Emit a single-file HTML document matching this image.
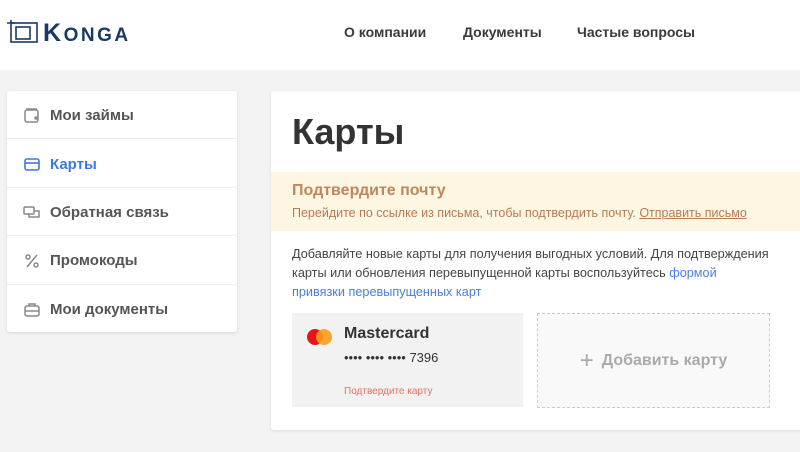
<!DOCTYPE html>
<html><head><meta charset="utf-8"><style>
*{margin:0;padding:0;box-sizing:border-box}
body{width:800px;height:452px;overflow:hidden;background:#f3f3f3;font-family:"Liberation Sans",sans-serif;position:relative}
.hdr{position:absolute;left:0;top:0;width:800px;height:70px;background:#fff}
.nav{position:absolute;top:24px;font-size:14px;font-weight:bold;color:#3a3a3a}
.side{position:absolute;left:7px;top:91px;width:230px;height:241px;background:#fff;border-radius:3px;box-shadow:0 1px 3px rgba(0,0,0,.12)}
.row{height:48.4px;border-bottom:1px solid #eee;display:flex;align-items:center;padding-left:16px;padding-top:2px;font-size:15px;font-weight:bold;color:#555}
.row:last-child{border-bottom:none}
.row svg{width:18px;height:18px;margin-right:9px}
.main{position:absolute;left:271px;top:91px;width:540px;height:339px;background:#fff;border-radius:3px;box-shadow:0 1px 3px rgba(0,0,0,.1)}
</style></head><body>
<div class="hdr">
<svg style="position:absolute;left:7px;top:20px" width="32" height="24" viewBox="0 0 32 24"><g fill="none" stroke="#1b3a63" stroke-width="1.6"><rect x="4" y="3" width="26" height="19"/><rect x="9" y="7" width="14" height="12"/><path d="M0 3h8M4 0v3"/></g></svg>
<div style="position:absolute;left:43px;top:19px;font-size:25px;font-weight:bold;color:#1b3a63;letter-spacing:2.5px">K<span style="font-size:19px">ONGA</span></div>
<div class="nav" style="left:344px">О компании</div>
<div class="nav" style="left:463px">Документы</div>
<div class="nav" style="left:577px">Частые вопросы</div>
</div>
<div class="side">
<div class="row"><svg viewBox="0 0 18 18" fill="none" stroke="#888" stroke-width="1.5"><rect x="2" y="3" width="13" height="12" rx="2"/><path d="M4 3V2h10"/><circle cx="13" cy="11" r="1"/></svg>Мои займы</div>
<div class="row" style="color:#3b78e0"><svg viewBox="0 0 18 18" fill="none" stroke="#3b78e0" stroke-width="1.6"><rect x="2" y="4" width="14" height="11" rx="2"/><path d="M2 8h14"/></svg>Карты</div>
<div class="row"><svg viewBox="0 0 18 18" fill="none" stroke="#888" stroke-width="1.5"><rect x="1" y="4" width="10" height="7" rx="1"/><path d="M6 11v3h10V8h-5"/></svg>Обратная связь</div>
<div class="row"><svg viewBox="0 0 18 18" fill="none" stroke="#888" stroke-width="1.5"><circle cx="5" cy="5" r="2"/><circle cx="13" cy="13" r="2"/><path d="M14 3L4 15"/></svg>Промокоды</div>
<div class="row"><svg viewBox="0 0 18 18" fill="none" stroke="#888" stroke-width="1.5"><rect x="2" y="5" width="14" height="10" rx="2"/><path d="M6 5V3h6v2M2 10h14"/></svg>Мои документы</div>
</div>
<div class="main">
<div style="position:absolute;left:21px;top:20px;font-size:36px;font-weight:bold;color:#333">Карты</div>
<div style="position:absolute;left:0;top:81px;width:540px;height:59px;background:#fdf6e2">
<div style="position:absolute;left:21px;top:10px;font-size:16px;font-weight:bold;color:#c0875a">Подтвердите почту</div>
<div style="position:absolute;left:21px;top:34px;font-size:12.5px;color:#b97a52">Перейдите по ссылке из письма, чтобы подтвердить почту. <u>Отправить письмо</u></div>
</div>
<div style="position:absolute;left:21px;top:154px;width:500px;font-size:12.7px;line-height:19px;color:#444">Добавляйте новые карты для получения выгодных условий. Для подтверждения<br>карты или обновления перевыпущенной карты воспользуйтесь <span style="color:#4a7fdc">формой<br>привязки перевыпущенных карт</span></div>
<div style="position:absolute;left:21px;top:222px;width:231px;height:94px;background:#f2f2f2">
<div style="position:absolute;left:15px;top:16px;width:16px;height:16px;border-radius:50%;background:#e8141b"></div>
<div style="position:absolute;left:24px;top:16px;width:16px;height:16px;border-radius:50%;background:rgba(247,158,27,.9)"></div>
<div style="position:absolute;left:52px;top:12px;font-size:16px;font-weight:bold;color:#333">Mastercard</div>
<div style="position:absolute;left:52px;top:37px;font-size:13px;color:#333">•••• •••• •••• 7396</div>
<div style="position:absolute;left:52px;top:73px;font-size:10px;color:#e27063">Подтвердите карту</div>
</div>
<div style="position:absolute;left:266px;top:222px;width:233px;height:95px;border:1px dashed #ccc;background:#f9f9f9;display:flex;align-items:center;justify-content:center;font-size:16px;font-weight:bold;color:#aaa"><span style="font-size:24px;font-weight:normal;margin-right:8px">+</span>Добавить карту</div>
</div>
</body></html>
